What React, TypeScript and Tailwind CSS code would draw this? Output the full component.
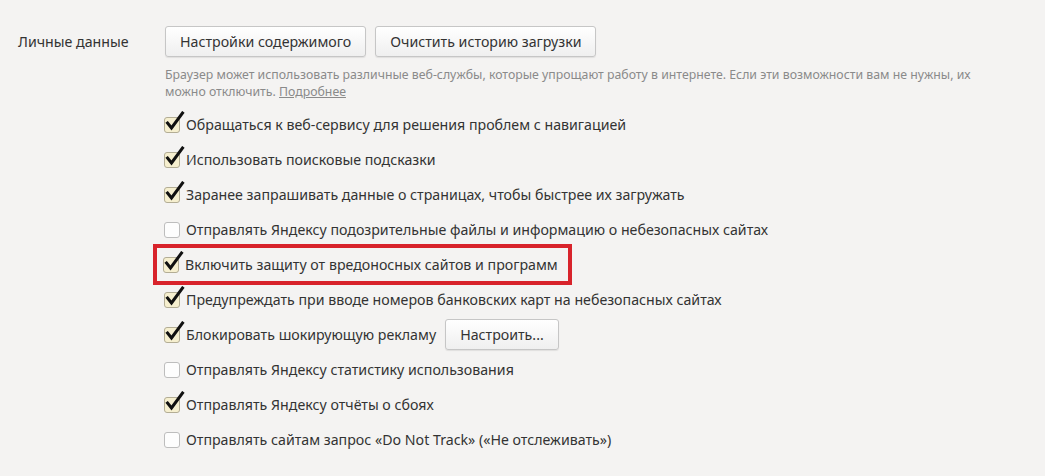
import React from "react";

const items: { label: string; checked: boolean; highlight?: boolean; button?: string }[] = [
  { label: "Обращаться к веб-сервису для решения проблем с навигацией", checked: true },
  { label: "Использовать поисковые подсказки", checked: true },
  { label: "Заранее запрашивать данные о страницах, чтобы быстрее их загружать", checked: true },
  { label: "Отправлять Яндексу подозрительные файлы и информацию о небезопасных сайтах", checked: false },
  { label: "Включить защиту от вредоносных сайтов и программ", checked: true, highlight: true },
  { label: "Предупреждать при вводе номеров банковских карт на небезопасных сайтах", checked: true },
  { label: "Блокировать шокирующую рекламу", checked: true, button: "Настроить..." },
  { label: "Отправлять Яндексу статистику использования", checked: false },
  { label: "Отправлять Яндексу отчёты о сбоях", checked: true },
  { label: "Отправлять сайтам запрос «Do Not Track» («Не отслеживать»)", checked: false },
];

const Btn = ({ children }: { children: React.ReactNode }) => (
  <button className="h-[31px] px-[14px] rounded-[3px] border border-[#c6c6c6] bg-gradient-to-b from-[#ffffff] to-[#efefef] text-[14.2px] text-[#333] shadow-[0_1px_1px_rgba(0,0,0,0.08)]">
    {children}
  </button>
);

const Checkbox = ({ checked }: { checked: boolean }) => (
  <span className="relative inline-block w-[16px] h-[16px] shrink-0">
    <span
      className={
        checked
          ? "block w-full h-full rounded-[3px] border border-[#b3ad95] bg-[#f6efcf]"
          : "block w-full h-full rounded-[3px] border border-[#bdbdbd] bg-[#fdfdfd]"
      }
    />
    {checked && (
      <svg className="absolute left-0 top-[-6px]" width="21" height="20" viewBox="0 0 21 20">
        <path d="M3.5 12 L7.5 17 L18.5 2" fill="none" stroke="#111" strokeWidth="3" strokeLinecap="square" strokeLinejoin="miter" />
      </svg>
    )}
  </span>
);

export default function App() {
  return (
    <div className="w-[1045px] h-[476px] bg-[#f4f3f2] font-['Segoe_UI','Noto_Sans',sans-serif] text-[#333] pt-[26px] flex">
      <div className="w-[164px] pl-[18px] h-[31px] flex items-center text-[14.2px]">Личные данные</div>
      <div className="flex flex-col">
        <div className="flex gap-[9px] pl-[1px]">
          <Btn>Настройки содержимого</Btn>
          <Btn>Очистить историю загрузки</Btn>
        </div>
        <p className="mt-[9px] pl-[1px] w-[820px] text-[12.3px] leading-[17px] text-[#8a8a8a]">
          Браузер может использовать различные веб-службы, которые упрощают работу в интернете. Если эти возможности вам не нужны, их можно отключить.{" "}
          <span className="underline">Подробнее</span>
        </p>
        <div className="mt-[7px] flex flex-col">
          {items.map((it) =>
            it.highlight ? (
              <div
                key={it.label}
                className="h-[41px] -my-[3px] -ml-[11px] w-fit flex items-center gap-[6px] border-4 border-[#d8232b] pl-[6px] pr-[10px] text-[14.2px]"
              >
                <Checkbox checked={it.checked} />
                <span>{it.label}</span>
              </div>
            ) : (
              <div key={it.label} className="h-[35px] flex items-center gap-[6px] text-[14.2px]">
                <Checkbox checked={it.checked} />
                <span>{it.label}</span>
                {it.button && (
                  <span className="ml-[3px]">
                    <Btn>{it.button}</Btn>
                  </span>
                )}
              </div>
            )
          )}
        </div>
      </div>
    </div>
  );
}
